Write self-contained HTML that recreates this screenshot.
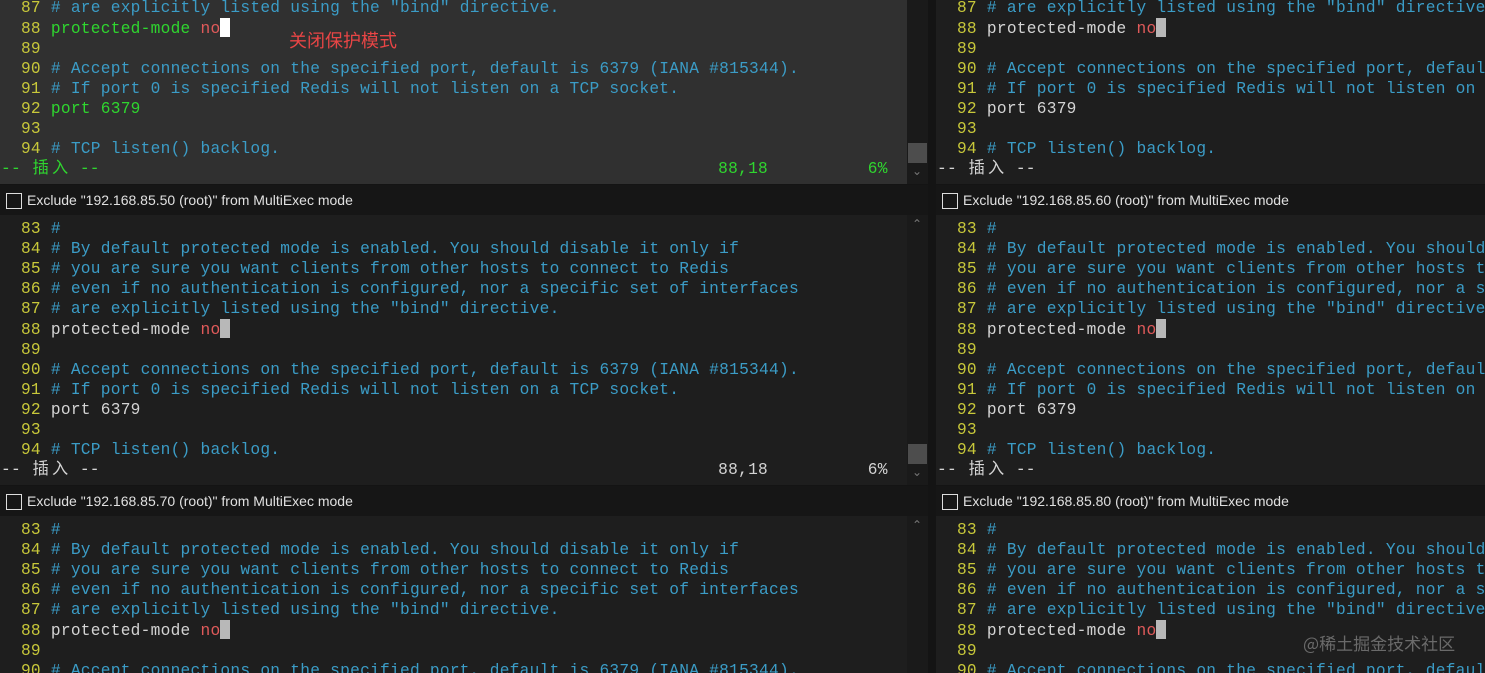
<!DOCTYPE html>
<html style="width:1485px;height:673px;overflow:hidden"><head><meta charset="utf-8"><style>
*{margin:0;padding:0;box-sizing:border-box}
body{width:1485px;height:673px;overflow:hidden;background:#141414;position:relative;font-family:"Liberation Mono","Noto Sans CJK SC",monospace}
.pane{position:absolute;height:270px;background:#1e1e1e;overflow:hidden}
.pane.act{background:#303030}
pre{position:absolute;left:1px;top:4px;font-family:"Liberation Mono","Noto Sans CJK SC",monospace;font-size:16.2px;letter-spacing:0.26px;line-height:20px;color:#d4d4d4;white-space:pre}
.n{color:#c8c83a}.c{color:#3b9cc6}.r{color:#e05a5a}.g{color:#2fd62f}
.cur{display:inline-block;width:9.7px;height:19px;vertical-align:-4px;background:#b8b8b8}
.act .cur{background:#fff}
.w{display:inline-block;width:19.46px;text-align:center;letter-spacing:0}
.sb{position:absolute;width:21px;background:#1a1a1a;height:270px}
.bar{position:absolute;height:30px;background:#161616;font-family:"Liberation Sans",sans-serif;font-size:14px;color:#e0e0e0;line-height:30px;padding-left:27px}
.bar:before{content:"";position:absolute;left:6px;top:8px;width:14px;height:14px;border:1px solid #ddd}
.arr{position:absolute;left:5px;color:#777;font-family:"DejaVu Sans",sans-serif;font-size:12px}
.thumb{position:absolute;left:1px;width:19px;height:20px;background:#4d4d4d}
</style></head><body>

<div class="pane act" style="left:0;top:-86px;width:907px"><pre><span class="n">  83 </span><span class="c">#</span>
<span class="n">  84 </span><span class="c"># By default protected mode is enabled.</span>
<span class="n">  85 </span>
<span class="n">  86 </span>
<span class="n">  87 </span><span class="c"># are explicitly listed using the "bind" directive.</span>
<span class="n">  88 </span><span class="g">protected-mode</span> <span class="r">no</span><span class="cur"></span>
<span class="n">  89 </span>
<span class="n">  90 </span><span class="c"># Accept connections on the specified port, default is 6379 (IANA #815344).</span>
<span class="n">  91 </span><span class="c"># If port 0 is specified Redis will not listen on a TCP socket.</span>
<span class="n">  92 </span><span class="g">port 6379</span>
<span class="n">  93 </span>
<span class="n">  94 </span><span class="c"># TCP listen() backlog.</span>
<span class="g">-- <span class="w">插</span><span class="w">入</span> --                                                              88,18          6%</span></pre></div>
<div style="position:absolute;left:289px;top:27px;color:#e84545;font-family:'Noto Sans CJK SC',sans-serif;font-size:18px">关闭保护模式</div>
<div class="sb" style="left:907px;top:-86px;height:270px"><div class="thumb" style="top:229px"></div><div class="arr" style="top:250px">&#8964;</div></div>

<div class="bar" style="left:0;top:185px;width:928px">Exclude "192.168.85.50 (root)" from MultiExec mode</div>
<div class="bar" style="left:936px;top:185px;width:549px">Exclude "192.168.85.60 (root)" from MultiExec mode</div>
<div class="bar" style="left:0;top:486px;width:928px">Exclude "192.168.85.70 (root)" from MultiExec mode</div>
<div class="bar" style="left:936px;top:486px;width:549px">Exclude "192.168.85.80 (root)" from MultiExec mode</div>

<div class="pane" style="left:936px;top:-86px;width:549px"><pre><span class="n">  83 </span><span class="c">#</span>
<span class="n">  84 </span>
<span class="n">  85 </span>
<span class="n">  86 </span>
<span class="n">  87 </span><span class="c"># are explicitly listed using the "bind" directive.</span>
<span class="n">  88 </span>protected-mode <span class="r">no</span><span class="cur"></span>
<span class="n">  89 </span>
<span class="n">  90 </span><span class="c"># Accept connections on the specified port, default is 6379 (IANA #815344).</span>
<span class="n">  91 </span><span class="c"># If port 0 is specified Redis will not listen on a TCP socket.</span>
<span class="n">  92 </span>port 6379
<span class="n">  93 </span>
<span class="n">  94 </span><span class="c"># TCP listen() backlog.</span>
-- <span class="w">插</span><span class="w">入</span> --</pre></div>

<div class="pane" style="left:0;top:215px;width:907px"><pre><span class="n">  83 </span><span class="c">#</span>
<span class="n">  84 </span><span class="c"># By default protected mode is enabled. You should disable it only if</span>
<span class="n">  85 </span><span class="c"># you are sure you want clients from other hosts to connect to Redis</span>
<span class="n">  86 </span><span class="c"># even if no authentication is configured, nor a specific set of interfaces</span>
<span class="n">  87 </span><span class="c"># are explicitly listed using the "bind" directive.</span>
<span class="n">  88 </span>protected-mode <span class="r">no</span><span class="cur"></span>
<span class="n">  89 </span>
<span class="n">  90 </span><span class="c"># Accept connections on the specified port, default is 6379 (IANA #815344).</span>
<span class="n">  91 </span><span class="c"># If port 0 is specified Redis will not listen on a TCP socket.</span>
<span class="n">  92 </span>port 6379
<span class="n">  93 </span>
<span class="n">  94 </span><span class="c"># TCP listen() backlog.</span>
-- <span class="w">插</span><span class="w">入</span> --                                                              88,18          6%</pre></div>
<div class="sb" style="left:907px;top:215px"><div class="arr" style="top:2px">&#8963;</div><div class="thumb" style="top:229px"></div><div class="arr" style="top:250px">&#8964;</div></div>
<div class="pane" style="left:936px;top:215px;width:549px"><pre><span class="n">  83 </span><span class="c">#</span>
<span class="n">  84 </span><span class="c"># By default protected mode is enabled. You should disable it only if</span>
<span class="n">  85 </span><span class="c"># you are sure you want clients from other hosts to connect to Redis</span>
<span class="n">  86 </span><span class="c"># even if no authentication is configured, nor a specific set of interfaces</span>
<span class="n">  87 </span><span class="c"># are explicitly listed using the "bind" directive.</span>
<span class="n">  88 </span>protected-mode <span class="r">no</span><span class="cur"></span>
<span class="n">  89 </span>
<span class="n">  90 </span><span class="c"># Accept connections on the specified port, default is 6379 (IANA #815344).</span>
<span class="n">  91 </span><span class="c"># If port 0 is specified Redis will not listen on a TCP socket.</span>
<span class="n">  92 </span>port 6379
<span class="n">  93 </span>
<span class="n">  94 </span><span class="c"># TCP listen() backlog.</span>
-- <span class="w">插</span><span class="w">入</span> --</pre></div>

<div class="pane" style="left:0;top:516px;width:907px;height:157px"><pre><span class="n">  83 </span><span class="c">#</span>
<span class="n">  84 </span><span class="c"># By default protected mode is enabled. You should disable it only if</span>
<span class="n">  85 </span><span class="c"># you are sure you want clients from other hosts to connect to Redis</span>
<span class="n">  86 </span><span class="c"># even if no authentication is configured, nor a specific set of interfaces</span>
<span class="n">  87 </span><span class="c"># are explicitly listed using the "bind" directive.</span>
<span class="n">  88 </span>protected-mode <span class="r">no</span><span class="cur"></span>
<span class="n">  89 </span>
<span class="n">  90 </span><span class="c"># Accept connections on the specified port, default is 6379 (IANA #815344).</span></pre></div>
<div class="sb" style="left:907px;top:516px;height:157px"><div class="arr" style="top:2px">&#8963;</div></div>
<div class="pane" style="left:936px;top:516px;width:549px;height:157px"><pre><span class="n">  83 </span><span class="c">#</span>
<span class="n">  84 </span><span class="c"># By default protected mode is enabled. You should disable it only if</span>
<span class="n">  85 </span><span class="c"># you are sure you want clients from other hosts to connect to Redis</span>
<span class="n">  86 </span><span class="c"># even if no authentication is configured, nor a specific set of interfaces</span>
<span class="n">  87 </span><span class="c"># are explicitly listed using the "bind" directive.</span>
<span class="n">  88 </span>protected-mode <span class="r">no</span><span class="cur"></span>
<span class="n">  89 </span>
<span class="n">  90 </span><span class="c"># Accept connections on the specified port, default is 6379 (IANA #815344).</span></pre></div>
<div style="position:absolute;left:1303px;top:630px;color:#6a6a6a;font-family:'Noto Sans CJK SC',sans-serif;font-size:17px">@稀土掘金技术社区</div>
</body></html>
